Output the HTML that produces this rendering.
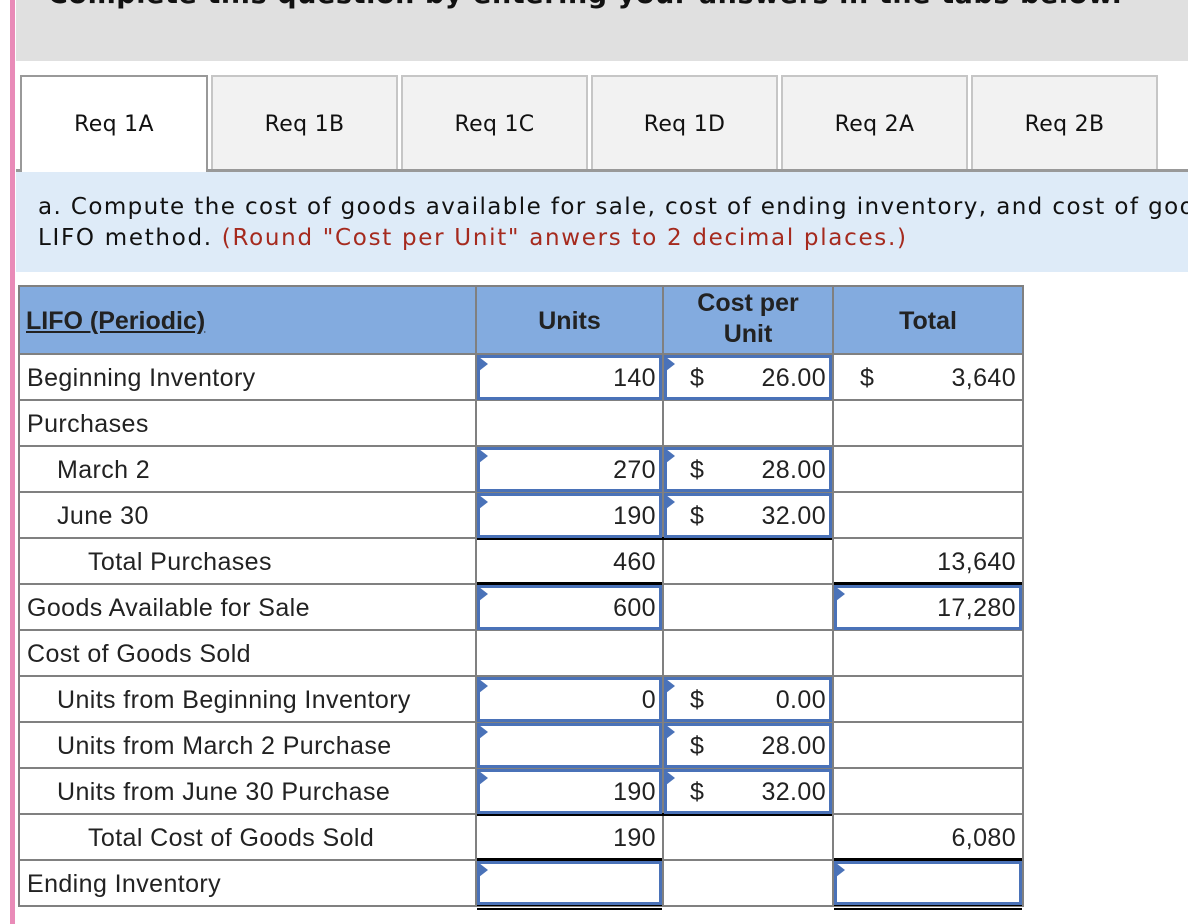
<!DOCTYPE html>
<html><head><meta charset="utf-8">
<style>
*{margin:0;padding:0;box-sizing:border-box}
body{width:1188px;height:924px;overflow:hidden;background:#fff;position:relative;font-family:"Liberation Sans",Arial,sans-serif;color:#222}
.a{position:absolute}
.v{font-family:"DejaVu Sans",Verdana,sans-serif}
.tab{position:absolute;top:75px;height:96px;background:#f2f2f2;border:2px solid #c6c6c6;border-bottom:none;font-size:22px;color:#111;text-align:center;line-height:96px;letter-spacing:0.3px}
.cell{position:absolute;font-size:25px;line-height:46px;white-space:nowrap;letter-spacing:0.4px}
.hl{position:absolute;background:#808080}
.blk{position:absolute;background:#000;height:3px}
.inp{position:absolute;border:3px solid #4a72b8;background:#fff}
.inp:before{content:"";position:absolute;left:-1px;top:-1px;border-left:9px solid #4a72b8;border-top:7px solid transparent;border-bottom:7px solid transparent}
.r{text-align:right}
</style></head><body>
<div class="a" style="left:10px;top:0;width:5px;height:924px;background:#e98bb8"></div>
<div class="a" style="left:16px;top:0;width:1172px;height:61px;background:#e0e0e0;overflow:hidden">
<div class="a v" style="left:32px;top:-21px;font-size:27px;font-weight:bold;color:#111;white-space:nowrap;letter-spacing:0.6px">Complete this question by entering your answers in the tabs below.</div>
</div>

<div class="tab v" style="left:20px;width:188px;background:#fff;border-color:#999;height:98px">Req 1A</div>
<div class="tab v" style="left:211px;width:187px">Req 1B</div>
<div class="tab v" style="left:401px;width:187px">Req 1C</div>
<div class="tab v" style="left:591px;width:187px">Req 1D</div>
<div class="tab v" style="left:781px;width:187px">Req 2A</div>
<div class="tab v" style="left:971px;width:187px">Req 2B</div>
<div class="a" style="left:16px;top:169px;width:4px;height:3px;background:#999"></div>
<div class="a" style="left:208px;top:169px;width:980px;height:3px;background:#999"></div>

<div class="a" style="left:16px;top:172px;width:1172px;height:100px;background:#deebf8;overflow:hidden">
<div class="a v" style="left:22px;top:20px;font-size:23px;line-height:31px;color:#111;white-space:nowrap;letter-spacing:1.4px">a. Compute the cost of goods available for sale, cost of ending inventory, and cost of goods sold under LIFO</div>
<div class="a v" style="left:22px;top:51px;font-size:23px;line-height:31px;color:#111;white-space:nowrap;letter-spacing:1.7px">LIFO method. <span style="color:#a52a1e">(Round "Cost per Unit" anwers to 2 decimal places.)</span></div>
</div>

<!-- table -->
<div class="a" style="left:18px;top:286px;width:1006px;height:69px;background:#83abdf"></div>
<div class="cell" style="left:26px;top:298px;font-weight:bold;text-decoration:underline;letter-spacing:0">LIFO (Periodic)</div>
<div class="cell" style="left:476px;width:187px;top:298px;font-weight:bold;text-align:center;letter-spacing:0">Units</div>
<div class="cell" style="left:663px;width:170px;top:288px;font-weight:bold;text-align:center;line-height:31px;letter-spacing:0">Cost per<br>Unit</div>
<div class="cell" style="left:833px;width:190px;top:298px;font-weight:bold;text-align:center;letter-spacing:0">Total</div>

<!-- grid lines -->
<div class="hl" style="left:18px;top:285px;width:1006px;height:2px"></div>
<div class="hl" style="left:18px;top:285px;width:2px;height:622px"></div>
<div class="hl" style="left:475px;top:285px;width:2px;height:622px"></div>
<div class="hl" style="left:662px;top:285px;width:2px;height:622px"></div>
<div class="hl" style="left:832px;top:285px;width:2px;height:622px"></div>
<div class="hl" style="left:1022px;top:285px;width:2px;height:622px"></div>
<div class="hl" style="left:18px;top:353px;width:1006px;height:2px"></div>
<div class="hl" style="left:18px;top:399px;width:1006px;height:2px"></div>
<div class="hl" style="left:18px;top:445px;width:1006px;height:2px"></div>
<div class="hl" style="left:18px;top:491px;width:1006px;height:2px"></div>
<div class="hl" style="left:18px;top:537px;width:1006px;height:2px"></div>
<div class="hl" style="left:18px;top:583px;width:1006px;height:2px"></div>
<div class="hl" style="left:18px;top:629px;width:1006px;height:2px"></div>
<div class="hl" style="left:18px;top:675px;width:1006px;height:2px"></div>
<div class="hl" style="left:18px;top:721px;width:1006px;height:2px"></div>
<div class="hl" style="left:18px;top:767px;width:1006px;height:2px"></div>
<div class="hl" style="left:18px;top:813px;width:1006px;height:2px"></div>
<div class="hl" style="left:18px;top:859px;width:1006px;height:2px"></div>
<div class="hl" style="left:18px;top:905px;width:1006px;height:2px"></div>

<!-- black lines -->
<div class="blk" style="left:477px;top:537px;width:355px"></div>
<div class="blk" style="left:477px;top:582px;width:185px"></div>
<div class="blk" style="left:834px;top:582px;width:188px"></div>
<div class="blk" style="left:477px;top:813px;width:355px"></div>
<div class="blk" style="left:477px;top:858px;width:185px"></div>
<div class="blk" style="left:834px;top:858px;width:188px"></div>
<div class="blk" style="left:477px;top:904px;width:185px;height:2px"></div>
<div class="blk" style="left:834px;top:904px;width:188px;height:2px"></div>
<div class="blk" style="left:477px;top:908px;width:185px;height:2px"></div>
<div class="blk" style="left:834px;top:908px;width:188px;height:2px"></div>

<!-- labels -->
<div class="cell" style="left:27px;top:355px">Beginning Inventory</div>
<div class="cell" style="left:27px;top:401px">Purchases</div>
<div class="cell" style="left:57px;top:447px">March 2</div>
<div class="cell" style="left:57px;top:493px">June 30</div>
<div class="cell" style="left:88px;top:539px">Total Purchases</div>
<div class="cell" style="left:27px;top:585px">Goods Available for Sale</div>
<div class="cell" style="left:27px;top:631px">Cost of Goods Sold</div>
<div class="cell" style="left:57px;top:677px">Units from Beginning Inventory</div>
<div class="cell" style="left:57px;top:723px">Units from March 2 Purchase</div>
<div class="cell" style="left:57px;top:769px">Units from June 30 Purchase</div>
<div class="cell" style="left:88px;top:815px">Total Cost of Goods Sold</div>
<div class="cell" style="left:27px;top:861px">Ending Inventory</div>

<!-- inputs -->
<div class="inp" style="left:477px;top:355px;width:185px;height:45px"></div>
<div class="inp" style="left:664px;top:355px;width:168px;height:45px"></div>
<div class="inp" style="left:477px;top:447px;width:185px;height:45px"></div>
<div class="inp" style="left:664px;top:447px;width:168px;height:45px"></div>
<div class="inp" style="left:477px;top:493px;width:185px;height:45px"></div>
<div class="inp" style="left:664px;top:493px;width:168px;height:45px"></div>
<div class="inp" style="left:477px;top:585px;width:185px;height:45px"></div>
<div class="inp" style="left:834px;top:585px;width:188px;height:45px"></div>
<div class="inp" style="left:477px;top:677px;width:185px;height:45px"></div>
<div class="inp" style="left:664px;top:677px;width:168px;height:45px"></div>
<div class="inp" style="left:477px;top:723px;width:185px;height:45px"></div>
<div class="inp" style="left:664px;top:723px;width:168px;height:45px"></div>
<div class="inp" style="left:477px;top:769px;width:185px;height:45px"></div>
<div class="inp" style="left:664px;top:769px;width:168px;height:45px"></div>
<div class="inp" style="left:477px;top:861px;width:185px;height:44px"></div>
<div class="inp" style="left:834px;top:861px;width:188px;height:44px"></div>

<!-- values -->
<div class="cell r" style="left:477px;width:179px;top:355px">140</div>
<div class="cell" style="left:690px;top:355px">$</div>
<div class="cell r" style="left:700px;width:126px;top:355px">26.00</div>
<div class="cell" style="left:860px;top:355px">$</div>
<div class="cell r" style="left:840px;width:176px;top:355px">3,640</div>

<div class="cell r" style="left:477px;width:179px;top:447px">270</div>
<div class="cell" style="left:690px;top:447px">$</div>
<div class="cell r" style="left:700px;width:126px;top:447px">28.00</div>
<div class="cell r" style="left:477px;width:179px;top:493px">190</div>
<div class="cell" style="left:690px;top:493px">$</div>
<div class="cell r" style="left:700px;width:126px;top:493px">32.00</div>

<div class="cell r" style="left:477px;width:179px;top:539px">460</div>
<div class="cell r" style="left:840px;width:176px;top:539px">13,640</div>
<div class="cell r" style="left:477px;width:179px;top:585px">600</div>
<div class="cell r" style="left:840px;width:176px;top:585px">17,280</div>

<div class="cell r" style="left:477px;width:179px;top:677px">0</div>
<div class="cell" style="left:690px;top:677px">$</div>
<div class="cell r" style="left:700px;width:126px;top:677px">0.00</div>
<div class="cell" style="left:690px;top:723px">$</div>
<div class="cell r" style="left:700px;width:126px;top:723px">28.00</div>
<div class="cell r" style="left:477px;width:179px;top:769px">190</div>
<div class="cell" style="left:690px;top:769px">$</div>
<div class="cell r" style="left:700px;width:126px;top:769px">32.00</div>

<div class="cell r" style="left:477px;width:179px;top:815px">190</div>
<div class="cell r" style="left:840px;width:176px;top:815px">6,080</div>
</body></html>
